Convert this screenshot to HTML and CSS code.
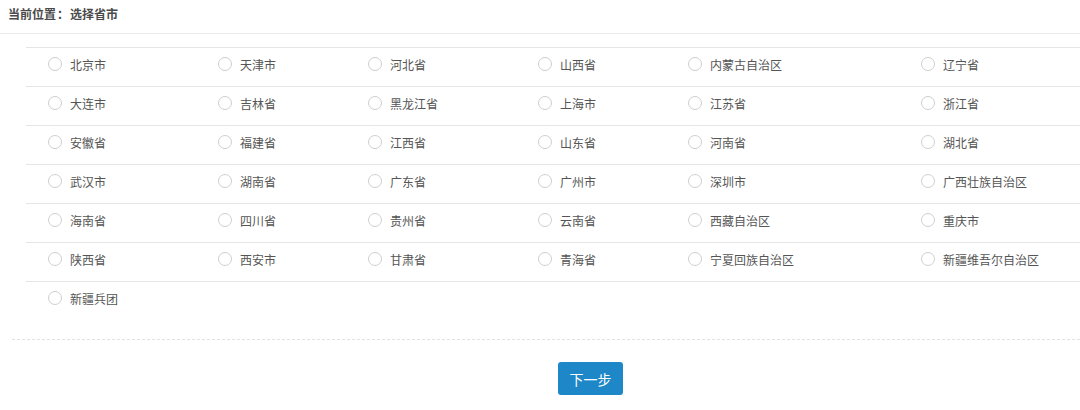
FILE: index.html
```html
<!DOCTYPE html>
<html lang="zh">
<head>
<meta charset="utf-8">
<link rel="stylesheet" href="styles.css">
</head>
<body>
<div class="header">当前位置<span class="colon">：</span>选择省市</div>
<div class="panel">
  <div class="table">
    <div class="row">
      <label class="cell"><span class="radio"></span>北京市</label>
      <label class="cell"><span class="radio"></span>天津市</label>
      <label class="cell"><span class="radio"></span>河北省</label>
      <label class="cell"><span class="radio"></span>山西省</label>
      <label class="cell"><span class="radio"></span>内蒙古自治区</label>
      <label class="cell"><span class="radio"></span>辽宁省</label>
    </div>
    <div class="row">
      <label class="cell"><span class="radio"></span>大连市</label>
      <label class="cell"><span class="radio"></span>吉林省</label>
      <label class="cell"><span class="radio"></span>黑龙江省</label>
      <label class="cell"><span class="radio"></span>上海市</label>
      <label class="cell"><span class="radio"></span>江苏省</label>
      <label class="cell"><span class="radio"></span>浙江省</label>
    </div>
    <div class="row">
      <label class="cell"><span class="radio"></span>安徽省</label>
      <label class="cell"><span class="radio"></span>福建省</label>
      <label class="cell"><span class="radio"></span>江西省</label>
      <label class="cell"><span class="radio"></span>山东省</label>
      <label class="cell"><span class="radio"></span>河南省</label>
      <label class="cell"><span class="radio"></span>湖北省</label>
    </div>
    <div class="row">
      <label class="cell"><span class="radio"></span>武汉市</label>
      <label class="cell"><span class="radio"></span>湖南省</label>
      <label class="cell"><span class="radio"></span>广东省</label>
      <label class="cell"><span class="radio"></span>广州市</label>
      <label class="cell"><span class="radio"></span>深圳市</label>
      <label class="cell"><span class="radio"></span>广西壮族自治区</label>
    </div>
    <div class="row">
      <label class="cell"><span class="radio"></span>海南省</label>
      <label class="cell"><span class="radio"></span>四川省</label>
      <label class="cell"><span class="radio"></span>贵州省</label>
      <label class="cell"><span class="radio"></span>云南省</label>
      <label class="cell"><span class="radio"></span>西藏自治区</label>
      <label class="cell"><span class="radio"></span>重庆市</label>
    </div>
    <div class="row">
      <label class="cell"><span class="radio"></span>陕西省</label>
      <label class="cell"><span class="radio"></span>西安市</label>
      <label class="cell"><span class="radio"></span>甘肃省</label>
      <label class="cell"><span class="radio"></span>青海省</label>
      <label class="cell"><span class="radio"></span>宁夏回族自治区</label>
      <label class="cell"><span class="radio"></span>新疆维吾尔自治区</label>
    </div>
    <div class="row last">
      <label class="cell"><span class="radio"></span>新疆兵团</label>
    </div>
  </div>
  <div class="footer">
    <button class="btn">下一步</button>
  </div>
</div>
</body>
</html>
```
FILE: styles.css
```css
html, body {
  margin: 0;
  padding: 0;
  background: #fff;
  font-family: "Noto Sans CJK SC", "Noto Sans", sans-serif;
  color: #555;
}
.header {
  height: 34px;
  box-sizing: border-box;
  padding: 5px 8px 0;
  font-size: 12px;
  font-weight: bold;
  color: #4a4a4a;
  line-height: 18px;
  border-bottom: 1px solid #ececec;
}
.colon {
  margin: 0 1px 0 1px;
}
.panel {
  padding-top: 13px;
}
.table {
  margin-left: 26px;
}
.row {
  display: grid;
  grid-template-columns: 170px 150px 170px 150px 233px 1fr;
  height: 39px;
  box-sizing: border-box;
  border-top: 1px solid #e6e6e6;
  padding-top: 9px;
}
.row.last {
  height: 58px;
}
.cell {
  display: flex;
  align-items: center;
  height: 14px;
  padding-left: 22px;
  font-size: 12px;
  color: #555;
  white-space: nowrap;
}
.radio {
  width: 12px;
  height: 12px;
  border: 1px solid #cfcfcf;
  border-radius: 50%;
  margin-right: 8px;
  flex: none;
  background: #fff;
}
.footer {
  margin-left: 12px;
  border-top: 1px dashed #e2e2e2;
  display: flex;
  justify-content: center;
  padding-top: 22px;
}
.btn {
  margin-left: 89px;
  width: 65px;
  height: 33px;
  border: none;
  border-radius: 3px;
  background: #1e87c8;
  color: #fff;
  font-family: "Noto Sans CJK SC", sans-serif;
  font-size: 14px;
  cursor: pointer;
  padding: 0;
}
```
